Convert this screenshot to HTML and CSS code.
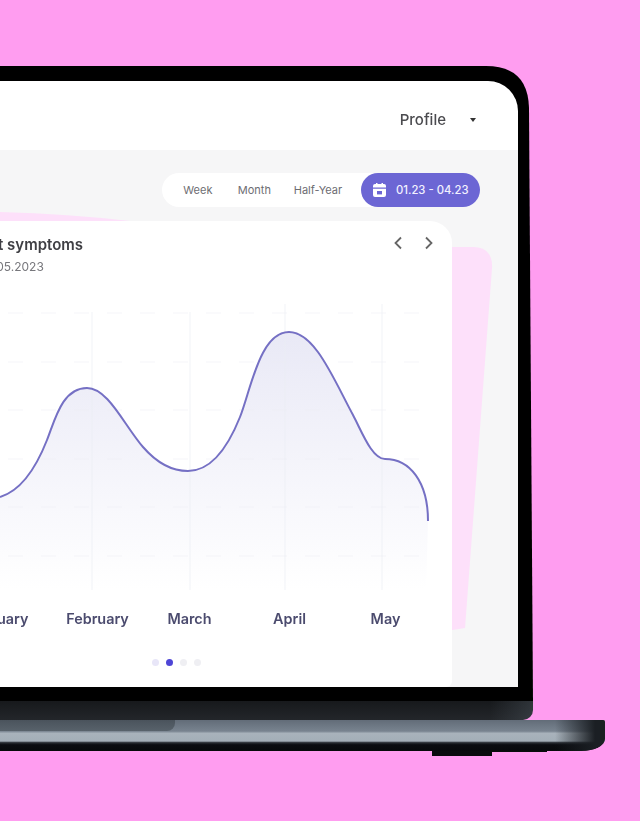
FILE: index.html
```html
<!DOCTYPE html>
<html lang="en">
<head>
  <meta charset="UTF-8">
  <meta name="viewport" content="width=device-width, initial-scale=1">
  <title>Symptoms chart</title>
  <link rel="stylesheet" href="styles.css">
</head>
<body>
  <div class="laptop">
    <div class="lid">
      <svg class="lid-shape" width="533" height="635" viewBox="0 66 533 635">
        <path d="M0 66 H486 Q528 66 529 108 L533 701 H0 Z" fill="#000"/>
      </svg>
      <div class="screen">
        <header class="topbar">
          <span class="profile">Profile</span>
          <span class="caret"></span>
        </header>
        <main class="content">
          <svg class="blob" width="518" height="537" viewBox="0 150 518 537">
            <path d="M0 212 Q70 214 130 221 H0 Z" fill="#fde0fa"/>
            <path d="M440 247 H474 Q493 248 492 268 L465 628 L440 632 Z" fill="#fde0fa"/>
          </svg>
          <div class="toolbar">
            <div class="range-pill">
              <a class="range-link">Week</a>
              <a class="range-link">Month</a>
              <a class="range-link">Half-Year</a>
              <a class="range-active">
                <svg class="cal-icon" width="13" height="14" viewBox="0 0 13 14">
                  <path d="M0 3 Q0 1 2 1 H11 Q13 1 13 3 V4.5 H0 Z M0 5.8 H13 V12 Q13 14 11 14 H2 Q0 14 0 12 Z" fill="#fff"/>
                  <rect x="3" y="0" width="1.5" height="2.4" fill="#fff"/>
                  <rect x="8.5" y="0" width="1.5" height="2.4" fill="#fff"/>
                  <rect x="4" y="8" width="5" height="3.4" fill="#6c66d4"/>
                </svg>
                01.23 - 04.23
              </a>
            </div>
          </div>
          <section class="card">
            <div class="card-head">
              <div class="card-title">
                <h3>Current symptoms</h3>
                <p>1.01 - 31.05.2023</p>
              </div>
              <div class="card-nav">
                <svg width="10" height="14" viewBox="0 0 10 14"><path d="M8 1.5 L2.5 7 L8 12.5" fill="none" stroke="#666" stroke-width="1.8"/></svg>
                <svg width="10" height="14" viewBox="0 0 10 14"><path d="M2 1.5 L7.5 7 L2 12.5" fill="none" stroke="#666" stroke-width="1.8"/></svg>
              </div>
            </div>
            <svg class="chart" width="452" height="295" viewBox="0 300 452 295">
              <defs>
                <linearGradient id="areaFill" x1="0" y1="0" x2="0" y2="1">
                  <stop offset="0" stop-color="#e9e9f6"/>
                  <stop offset="1" stop-color="#ffffff"/>
                </linearGradient>
              </defs>
              <path d="M0 497 C20 491 36 468 47 440 C55 420 62 388 87 388 C108 388 124 425 143 447 C156 462 170 471 188 471 C208 471 226 452 240 417 C251 389 260 332 289 332 C315 332 334 380 353 415 C362 432 372 459 385 459 C410 459 428 482 428 521 L426 590 H0 Z" fill="url(#areaFill)"/>
              <g stroke="#ecedf3" stroke-opacity="0.5" stroke-width="1" stroke-dasharray="15 18">
                <path d="M8 313 H420"/>
                <path d="M8 362 H420"/>
                <path d="M8 410 H420"/>
                <path d="M8 459 H420"/>
                <path d="M8 507 H420"/>
                <path d="M8 556 H420"/>
              </g>
              <g stroke="#ecedf3" stroke-opacity="0.45" stroke-width="1.5">
                <path d="M92 312 V590"/>
                <path d="M190 312 V590"/>
                <path d="M285 304 V590"/>
                <path d="M382 304 V590"/>
              </g>
              <path d="M0 497 C20 491 36 468 47 440 C55 420 62 388 87 388 C108 388 124 425 143 447 C156 462 170 471 188 471 C208 471 226 452 240 417 C251 389 260 332 289 332 C315 332 334 380 353 415 C362 432 372 459 385 459 C410 459 428 482 428 521" fill="none" stroke="#7570c4" stroke-width="2"/>
            </svg>
            <div class="months">
              <span>January</span>
              <span>February</span>
              <span>March</span>
              <span>April</span>
              <span>May</span>
            </div>
            <div class="dots">
              <i class="dot dot-first"></i>
              <i class="dot dot-on"></i>
              <i class="dot"></i>
              <i class="dot"></i>
            </div>
          </section>
        </main>
      </div>
    </div>
    <div class="chin"></div>
    <div class="base">
      <div class="notch"></div>
      <div class="foot"></div>
    </div>
  </div>
</body>
</html>
```

FILE: styles.css
```css
body { margin: 0; height: 821px; overflow: hidden; background: #ff9df0; font-family: Inter, "Liberation Sans", sans-serif; }
.laptop { padding-top: 66px; }
.lid { position: relative; width: 533px; height: 635px; padding-top: 15px; box-sizing: border-box; }
.lid-shape { position: absolute; top: 0; left: 0; }
.screen { position: relative; width: 518px; height: 606px; background: #fff; border-top-right-radius: 30px; overflow: hidden; filter: blur(0.35px); }
.topbar { display: flex; align-items: center; justify-content: flex-end; height: 69px; padding: 8px 42px 0 0; box-sizing: border-box; }
.profile { font-size: 15px; font-weight: 500; color: #4b4b4f; margin-right: 24px; }
.caret { width: 0; height: 0; border-left: 3px solid transparent; border-right: 3px solid transparent; border-top: 4px solid #333; }
.content { position: relative; height: 537px; background: #f6f6f7; }
.blob { position: absolute; top: 0; left: 0; }
.toolbar { position: relative; display: flex; justify-content: flex-end; padding: 23px 38px 0 0; }
.range-pill { display: flex; align-items: center; width: 318px; height: 34px; background: #fff; border-radius: 17px; font-size: 11px; color: #6d6d72; }
.range-link { text-align: center; }
.range-link:nth-child(1) { width: 75px; }
.range-link:nth-child(2) { width: 43px; }
.range-link:nth-child(3) { width: 90px; }
.range-active { display: flex; align-items: center; gap: 10px; height: 34px; margin-left: auto; padding: 0 12px; box-sizing: border-box; width: 119px; background: #6c66d4; border-radius: 17px; color: #f2f1ff; font-size: 11.3px; font-weight: 500; white-space: nowrap; }
.cal-icon { flex: none; }
.card { position: relative; width: 452px; height: 466px; margin-top: 14px; background: #fff; border-radius: 0 22px 6px 0; overflow: hidden; }
.card-head { display: flex; justify-content: space-between; height: 79px; padding: 15px 18px 0 0; box-sizing: border-box; }
.card-title { margin-left: -52px; white-space: nowrap; }
.card-title h3 { margin: 0; font-size: 15px; font-weight: 600; color: #3f3f44; line-height: 18px; }
.card-title p { margin: 5px 0 0; font-size: 12px; color: #77777c; line-height: 16px; }
.card-nav { display: flex; gap: 21px; }
.chart { display: block; }
.months { display: grid; grid-template-columns: 96px 99px 85px 115px 77px; margin: 14px 0 0 -48px; font-size: 14.4px; font-weight: 600; color: #4b4b6e; line-height: 20px; text-align: center; }
.dots { display: flex; gap: 7px; margin: 30px 0 0 152px; }
.dot { width: 7px; height: 7px; border-radius: 50%; background: #efeff3; }
.dot-first { background: #e8e6f8; }
.dot-on { background: #4e45d6; }
.chin { width: 533px; height: 19px; background: linear-gradient(90deg, rgba(70,78,86,0) 92%, rgba(70,78,86,0.5)), linear-gradient(#17191c, #23262a); border-bottom-right-radius: 10px; }
.base { position: relative; width: 605px; height: 31px; border-radius: 0 2px 24px 0 / 0 2px 12px 0; background: linear-gradient(#626c78 0, #78838f 36%, #a8b2bb 43%, #a3aeb7 68%, #2a2f35 73%, #0a0c10 80%, #07090c 100%); }
.base::after { content: ""; position: absolute; top: 0; right: 0; bottom: 0; width: 50px; border-radius: inherit; background: linear-gradient(90deg, rgba(27,31,36,0), #1b1f24 80%); }
.notch { width: 175px; height: 11px; background: linear-gradient(#4a535c, #58626b); border-bottom-right-radius: 8px; }
.foot { position: absolute; top: 31px; left: 432px; width: 60px; height: 5px; background: #090b0e; }
.foot::after { content: ""; position: absolute; top: 0; left: 60px; width: 55px; height: 1px; background: #090b0e; }
```
